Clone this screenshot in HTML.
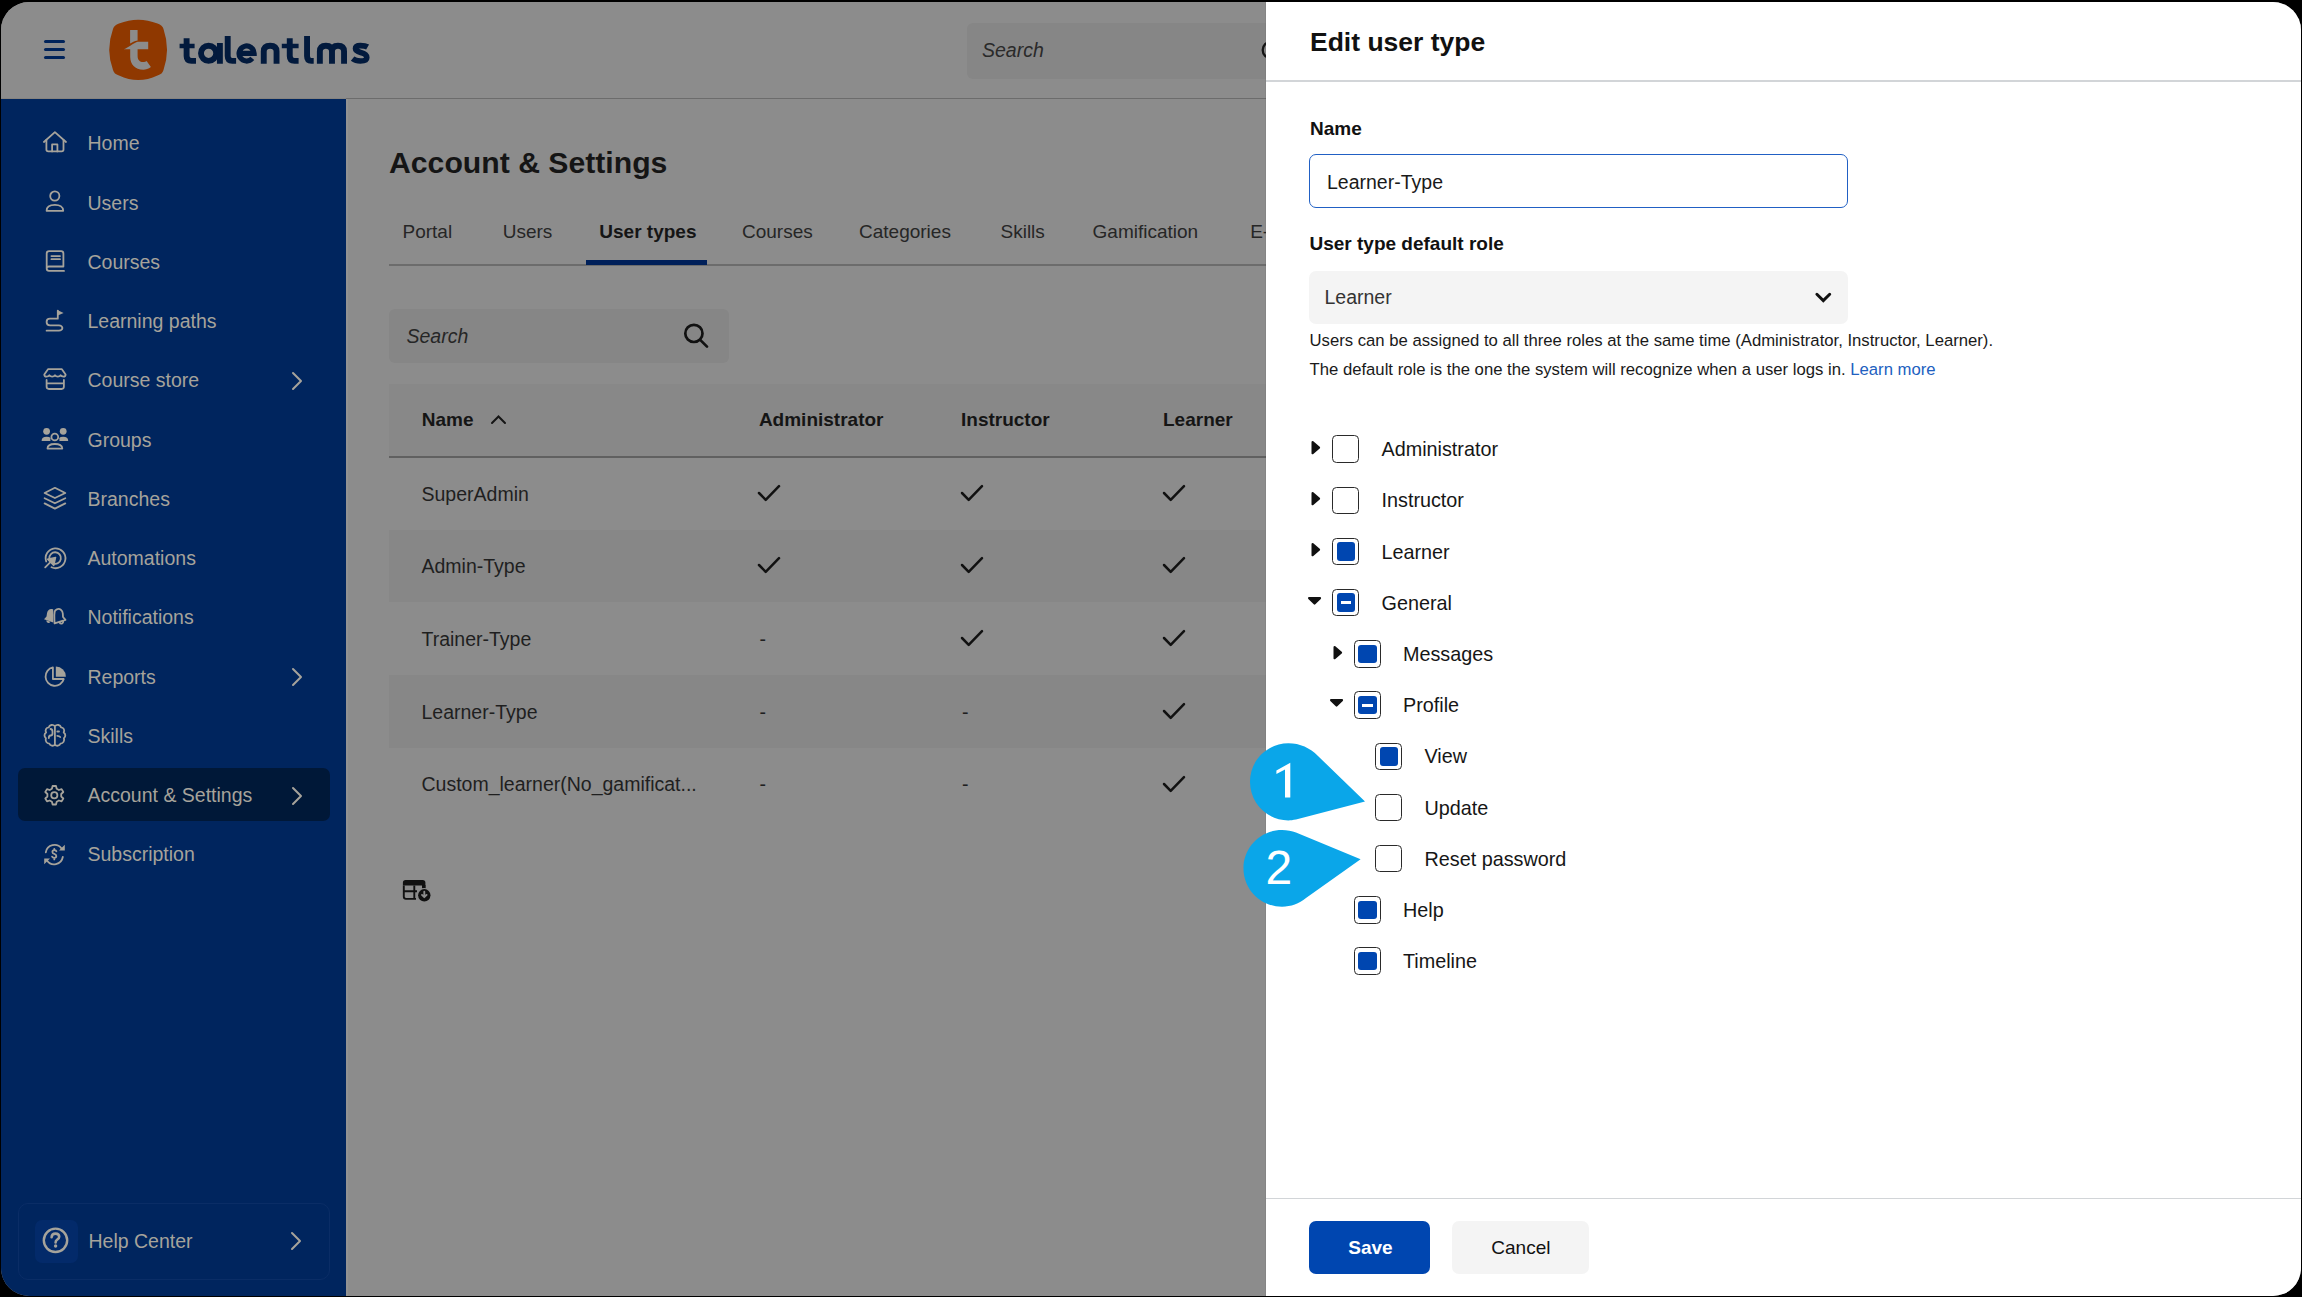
<!DOCTYPE html>
<html><head><meta charset="utf-8"><style>
html,body{margin:0;padding:0;background:#000;}
body{width:2302px;height:1297px;overflow:hidden;position:relative;font-family:"Liberation Sans", sans-serif;}
#f{position:absolute;left:0;top:0;width:2302px;height:1297px;overflow:hidden;clip-path:inset(2px 1px 1px 1px round 28px);background:#8c8c8c;}
.t{position:absolute;line-height:0;white-space:nowrap;}
.r{position:absolute;}
</style></head><body><div id="f">
<div class="r" style="left:0px;top:0px;width:1266px;height:98px;background:#8c8c8c;"></div>
<div class="r" style="left:0px;top:98px;width:346px;height:1px;background:#858380;"></div>
<div class="r" style="left:346px;top:98px;width:920px;height:1.2px;background:#6c6c6c;"></div>
<div class="r" style="left:0px;top:99px;width:346px;height:1200px;background:#00255e;"></div>
<div class="r" style="left:346px;top:99px;width:920px;height:1200px;background:#8c8c8c;"></div>
<div class="r" style="left:346px;top:99px;width:2.2px;height:1200px;background:#929292;"></div>
<div class="r" style="left:44.2px;top:40.25px;width:21.2px;height:2.9px;background:#00235a;border-radius:1.5px;"></div>
<div class="r" style="left:44.2px;top:48.449999999999996px;width:21.2px;height:2.9px;background:#00235a;border-radius:1.5px;"></div>
<div class="r" style="left:44.2px;top:56.449999999999996px;width:21.2px;height:2.9px;background:#00235a;border-radius:1.5px;"></div>
<svg class="r" style="left:105px;top:15px;" width="70" height="70" viewBox="0 0 70 70"><path d="M14 8.5 Q33.2 0.8 52.5 8.5 Q57.5 10 58.5 14 Q65.5 34.5 58.5 55 Q57.5 59 52.5 60.5 Q33.2 69.5 14 60.5 Q9 59 8 55 Q0.5 34.5 8 14 Q9 10 14 8.5 Z" fill="#8f3800"/><path d="M18.6 34.3 C23 33 27.5 28.5 32.6 26.7 L43.2 26.7 L43.2 34.3 L32.6 34.3 L32.6 41 C32.6 45 35 47 38 47 C39.5 47 40.8 46.6 41.6 45.9 L45.9 52.1 C43.5 54 40.8 54.8 38.3 54.8 C30 54.8 25.2 49 25.2 42 L25.2 34.3 Z M25.1 15.1 L32.6 15.1 L32.6 25.4 C29.5 25.9 27 27.2 25.1 28.5 Z" fill="#8c8c8c"/></svg>
<svg class="r" style="left:170px;top:25px;" width="210" height="50" viewBox="0 0 210 50"><g fill="none" stroke="#021a3d" stroke-width="5.9"><path d="M16.6 13.2 V31 Q16.6 35.85 21.5 35.85 H26"/><path d="M9.6 21 H24.6" stroke-width="4.6"/><circle cx="38.6" cy="28.3" r="7.6"/><path d="M49.9 18 V38.8"/><path d="M57.7 11 V31 Q57.7 35.85 62.3 35.85 H66.1"/><path d="M70.5 28.3 H84.1 A7.5 7.5 0 1 0 82.3 33.4" stroke-width="5.2"/><path d="M93.75 38.8 V26.5 Q93.75 20.75 100.15 20.75 Q106.55 20.75 106.55 26.5 V38.8"/><path d="M119.75 13.2 V31 Q119.75 35.85 124.5 35.85 H128.6"/><path d="M111.8 21 H128.6" stroke-width="4.6"/><path d="M137.05 11 V31 Q137.05 35.85 141.3 35.85 H143.7"/><path d="M149.85 38.8 V26.5 Q149.85 20.75 155.9 20.75 Q162 20.75 162 26.5 V38.8 M162 26.5 Q162 20.75 168 20.75 Q174.05 20.75 174.05 26.5 V38.8"/><path d="M197.6 22 Q195.3 20.6 190.4 20.6 Q185.5 20.6 185.5 23.6 Q185.5 26.2 190.6 27.4 Q196.8 28.8 196.8 32.6 Q196.8 36 190.4 36 Q185.6 36 182.6 33.6" stroke-width="5.6"/></g></svg>
<div class="r" style="left:967px;top:22.5px;width:320px;height:56px;background:#868686;border-radius:6px;"></div>
<div class="t" style="left:982px;top:50.24px;font-size:19.5px;color:#2a2a2a;font-style:italic;">Search</div>
<svg class="r" style="left:1258px;top:38px;" width="30" height="30" viewBox="0 0 30 30"><circle cx="13" cy="12" r="8.3" fill="none" stroke="#151515" stroke-width="2.3"/></svg>
<div class="r" style="left:18px;top:767.5px;width:312px;height:53.5px;background:#001838;border-radius:7px;"></div>
<div class="t" style="left:87.5px;top:143.44px;font-size:19.5px;color:#a6a39b;">Home</div>
<svg class="r" style="left:43px;top:130.2px;overflow:visible;" width="24" height="24" viewBox="0 0 24 24"><path d="M0.9 12 L11.9 2.2 L23 12" fill="none" stroke="#a6a39b" stroke-width="1.8" stroke-linecap="round" stroke-linejoin="round"/><path d="M3.4 9.8 V19.6 Q3.4 21.4 5.2 21.4 H18.6 Q20.5 21.4 20.5 19.6 V9.8" fill="none" stroke="#a6a39b" stroke-width="1.8" stroke-linecap="round" stroke-linejoin="round"/><path d="M9.1 21.4 V14.4 H14.4 V21.4" fill="none" stroke="#a6a39b" stroke-width="1.8" stroke-linecap="round" stroke-linejoin="round"/></svg>
<div class="t" style="left:87.5px;top:202.67px;font-size:19.5px;color:#a6a39b;">Users</div>
<svg class="r" style="left:43px;top:189.42999999999998px;overflow:visible;" width="24" height="24" viewBox="0 0 24 24"><circle cx="11.8" cy="7" r="4.6" fill="none" stroke="#a6a39b" stroke-width="1.8" stroke-linecap="round" stroke-linejoin="round"/><path d="M3.6 21.8 C3.6 17.6 7.4 15.9 11.9 15.9 C16.4 15.9 20.2 17.6 20.2 21.8 Z" fill="none" stroke="#a6a39b" stroke-width="1.8" stroke-linecap="round" stroke-linejoin="round"/></svg>
<div class="t" style="left:87.5px;top:261.90px;font-size:19.5px;color:#a6a39b;">Courses</div>
<svg class="r" style="left:43px;top:248.65999999999997px;overflow:visible;" width="24" height="24" viewBox="0 0 24 24"><path d="M3.7 19.6 V4.6 Q3.7 2.2 6.1 2.2 H18.1 Q20.4 2.2 20.4 4.6 V17.5 H6 Q3.7 17.5 3.7 19.6 Q3.7 21.9 6 21.9 H21" fill="none" stroke="#a6a39b" stroke-width="1.8" stroke-linecap="round" stroke-linejoin="round"/><path d="M8.4 7.1 H17 M8.4 10.2 H17" fill="none" stroke="#a6a39b" stroke-width="1.8" stroke-linecap="round" stroke-linejoin="round"/></svg>
<div class="t" style="left:87.5px;top:321.13px;font-size:19.5px;color:#a6a39b;">Learning paths</div>
<svg class="r" style="left:43px;top:307.89px;overflow:visible;" width="24" height="24" viewBox="0 0 24 24"><path d="M14.8 10.7 H7 C5 10.7 3.6 12.2 3.6 14 C3.6 15.8 5 17.3 7 17.3 H16 C17.9 17.3 19.4 18.6 19.4 20 C19.4 21.4 17.9 22.7 16 22.7 H3.6 M14.8 10.7 V2.6" fill="none" stroke="#a6a39b" stroke-width="1.8" stroke-linecap="round" stroke-linejoin="round"/><path d="M14.8 2.3 L20.6 5 L14.8 7.4 Z" fill="#a6a39b"/></svg>
<div class="t" style="left:87.5px;top:380.36px;font-size:19.5px;color:#a6a39b;">Course store</div>
<svg class="r" style="left:43px;top:367.12px;overflow:visible;" width="24" height="24" viewBox="0 0 24 24"><path d="M5 2.2 H18.9 L22.6 7.4 Q22.6 9.6 20.5 9.6 Q18.3 9.6 17.6 8.3 Q16.6 9.6 14.8 9.6 Q13 9.6 12 8.3 Q11 9.6 9.2 9.6 Q7.4 9.6 6.4 8.3 Q5.6 9.6 3.4 9.6 Q1.3 9.6 1.3 7.4 Z" fill="none" stroke="#a6a39b" stroke-width="1.8" stroke-linecap="round" stroke-linejoin="round"/><path d="M3.6 12.9 V19.6 Q3.6 22 6 22 H18.6 Q20.9 22 20.9 19.6 V12.9 M3.6 16.4 H20.9" fill="none" stroke="#a6a39b" stroke-width="1.8" stroke-linecap="round" stroke-linejoin="round"/></svg>
<svg class="r" style="left:290px;top:371.12px;" width="14" height="20" viewBox="0 0 14 20"><path d="M3 2 L11 10 L3 18" fill="none" stroke="#a6a39b" stroke-width="2" stroke-linecap="round" stroke-linejoin="round"/></svg>
<div class="t" style="left:87.5px;top:439.59px;font-size:19.5px;color:#a6a39b;">Groups</div>
<svg class="r" style="left:43px;top:426.34999999999997px;overflow:visible;" width="24" height="24" viewBox="0 0 24 24"><circle cx="3.6" cy="5.3" r="3.4" fill="#a6a39b"/><circle cx="20.2" cy="5.3" r="3.4" fill="#a6a39b"/><path d="M-1.4 14.9 Q-1.4 10.7 3.6 10.7 Q6.5 10.7 7.6 12 Q7.2 13.3 7.4 14.9 Z M25.2 14.9 Q25.2 10.7 20.2 10.7 Q17.3 10.7 16.2 12 Q16.6 13.3 16.4 14.9 Z" fill="#a6a39b"/><circle cx="11.8" cy="11" r="3.4" fill="none" stroke="#a6a39b" stroke-width="1.8" stroke-linecap="round" stroke-linejoin="round"/><path d="M4.5 22.6 C4.5 19.5 7.5 18 11.9 18 C16.3 18 19.3 19.5 19.3 22.6 Z" fill="none" stroke="#a6a39b" stroke-width="1.8" stroke-linecap="round" stroke-linejoin="round"/></svg>
<div class="t" style="left:87.5px;top:498.82px;font-size:19.5px;color:#a6a39b;">Branches</div>
<svg class="r" style="left:43px;top:485.58px;overflow:visible;" width="24" height="24" viewBox="0 0 24 24"><path d="M11.9 1.8 L22.3 7 L11.9 12 L1.6 7 Z" fill="none" stroke="#a6a39b" stroke-width="1.8" stroke-linecap="round" stroke-linejoin="round"/><path d="M1.6 12.2 L11.9 17.3 L22.3 12.2 M1.6 17.4 L11.9 22.6 L22.3 17.4" fill="none" stroke="#a6a39b" stroke-width="1.8" stroke-linecap="round" stroke-linejoin="round"/></svg>
<div class="t" style="left:87.5px;top:558.05px;font-size:19.5px;color:#a6a39b;">Automations</div>
<svg class="r" style="left:43px;top:544.81px;overflow:visible;" width="24" height="24" viewBox="0 0 24 24"><path d="M3.2 16.5 A9.9 9.9 0 1 1 8.5 22.3" fill="none" stroke="#a6a39b" stroke-width="1.8" stroke-linecap="round" stroke-linejoin="round"/><path d="M6.3 13.5 A5.8 5.8 0 1 1 10.4 18.6" fill="none" stroke="#a6a39b" stroke-width="1.8" stroke-linecap="round" stroke-linejoin="round"/><path d="M2.2 22.4 L8.4 16.2" fill="none" stroke="#a6a39b" stroke-width="1.8" stroke-linecap="round" stroke-linejoin="round" stroke-width="2.8"/><path d="M12.6 12.4 L4.6 14.2 L10.8 20.4 Z" fill="#a6a39b" stroke="#a6a39b" stroke-width="1.4" stroke-linejoin="round"/></svg>
<div class="t" style="left:87.5px;top:617.28px;font-size:19.5px;color:#a6a39b;">Notifications</div>
<svg class="r" style="left:43px;top:604.04px;overflow:visible;" width="24" height="24" viewBox="0 0 24 24"><path d="M10.2 5.5 C7.2 4 4.5 6 4 9.3 L3.5 12.6 L1 15.3 L10.2 18.6 Z" fill="#a6a39b"/><path d="M3.4 16.3 Q3.2 18.4 5 19 Q6.6 19.4 7.3 17.8" fill="#a6a39b"/><path d="M13.8 5.3 C16.8 4 19.6 6.2 19.8 9.5 L20 13 L22.5 15.8 L11.6 19.4 L11.4 15.8 C11.2 12.4 11.4 9 11.7 7.5 C11.9 6.4 12.6 5.8 13.8 5.3 Z" fill="none" stroke="#a6a39b" stroke-width="1.8" stroke-linecap="round" stroke-linejoin="round"/><path d="M16.5 18.5 Q17.4 20 19 19.6 Q20.4 19.2 20.2 17.4" fill="none" stroke="#a6a39b" stroke-width="1.8" stroke-linecap="round" stroke-linejoin="round"/></svg>
<div class="t" style="left:87.5px;top:676.51px;font-size:19.5px;color:#a6a39b;">Reports</div>
<svg class="r" style="left:43px;top:663.27px;overflow:visible;" width="24" height="24" viewBox="0 0 24 24"><g transform="translate(0 1.1)"><path d="M9.9 3.3 A9.3 9.3 0 1 0 20.8 14.9 H9.9 Z" fill="none" stroke="#a6a39b" stroke-width="1.8" stroke-linecap="round" stroke-linejoin="round"/><path d="M12.8 2.5 A10 10 0 0 1 22.9 12.6 H12.8 Z" fill="#a6a39b"/></g></svg>
<svg class="r" style="left:290px;top:667.27px;" width="14" height="20" viewBox="0 0 14 20"><path d="M3 2 L11 10 L3 18" fill="none" stroke="#a6a39b" stroke-width="2" stroke-linecap="round" stroke-linejoin="round"/></svg>
<div class="t" style="left:87.5px;top:735.74px;font-size:19.5px;color:#a6a39b;">Skills</div>
<svg class="r" style="left:43px;top:722.5px;overflow:visible;" width="24" height="24" viewBox="0 0 24 24"><path d="M11.9 3.2 C10 1.2 6.5 1.6 5.8 4.3 C3 4.4 1.9 7.3 3.1 9.4 C1 10.8 1 13.8 2.9 15.2 C2 17.8 3.6 20.6 6.3 20.6 C7 22.9 10.4 23.5 11.9 21.5 C13.4 23.5 16.8 22.9 17.5 20.6 C20.2 20.6 21.8 17.8 20.9 15.2 C22.8 13.8 22.8 10.8 20.7 9.4 C21.9 7.3 20.8 4.4 18 4.3 C17.3 1.6 13.8 1.2 11.9 3.2 Z M11.9 3.2 V21.5" fill="none" stroke="#a6a39b" stroke-width="1.8" stroke-linecap="round" stroke-linejoin="round" stroke-width="1.6"/><path d="M7.5 6 Q9.5 6.3 9.5 8.5 V10.5 Q9.5 12.5 7.5 12.5 Q5.8 12.8 5.8 15 M14.3 8.5 H16 M14.3 12.8 Q16.3 12.8 17.2 14" fill="none" stroke="#a6a39b" stroke-width="1.8" stroke-linecap="round" stroke-linejoin="round" stroke-width="1.4"/></svg>
<div class="t" style="left:87.5px;top:794.97px;font-size:19.5px;color:#a6a39b;">Account &amp; Settings</div>
<svg class="r" style="left:43px;top:781.73px;overflow:visible;" width="24" height="24" viewBox="0 0 24 24"><path d="M9.6 2.2 H13 L13.7 5 L15.9 6.2 L18.6 5.3 L20.3 8.2 L18.2 10.2 V12.7 L20.3 14.7 L18.6 17.6 L15.9 16.7 L13.7 17.9 L13 20.7 H9.6 L8.9 17.9 L6.7 16.7 L4 17.6 L2.3 14.7 L4.4 12.7 V10.2 L2.3 8.2 L4 5.3 L6.7 6.2 L8.9 5 Z" fill="none" stroke="#a6a39b" stroke-width="1.8" stroke-linecap="round" stroke-linejoin="round" stroke-width="1.7" transform="translate(0 1.8)"/><circle cx="11.3" cy="13.2" r="3.1" fill="none" stroke="#a6a39b" stroke-width="1.8" stroke-linecap="round" stroke-linejoin="round"/></svg>
<svg class="r" style="left:290px;top:785.73px;" width="14" height="20" viewBox="0 0 14 20"><path d="M3 2 L11 10 L3 18" fill="none" stroke="#a6a39b" stroke-width="2" stroke-linecap="round" stroke-linejoin="round"/></svg>
<div class="t" style="left:87.5px;top:854.20px;font-size:19.5px;color:#a6a39b;">Subscription</div>
<svg class="r" style="left:43px;top:840.96px;overflow:visible;" width="24" height="24" viewBox="0 0 24 24"><path d="M2.8 11.3 A8.8 8.8 0 0 1 18.6 7.6 M19.8 16 A8.8 8.8 0 0 1 3.9 19.5" fill="none" stroke="#a6a39b" stroke-width="1.8" stroke-linecap="round" stroke-linejoin="round" stroke-width="1.9"/><path d="M21.8 3.8 V9.6 H16 Z M1.2 23.2 V17.4 H7 Z" fill="#a6a39b"/><path d="M13.4 10.2 Q12.8 9.2 11.3 9.2 Q9.4 9.2 9.4 10.9 Q9.4 12.4 11.3 12.9 Q13.3 13.5 13.3 15 Q13.3 16.8 11.3 16.8 Q9.7 16.8 9.1 15.6 M11.3 7.8 V9.2 M11.3 16.8 V18.4" fill="none" stroke="#a6a39b" stroke-width="1.8" stroke-linecap="round" stroke-linejoin="round" stroke-width="1.6"/></svg>
<div class="r" style="left:18px;top:1202.5px;width:312px;height:77px;border:1.5px solid #0a2d66;border-radius:10px;box-sizing:border-box;"></div>
<div class="r" style="left:34.5px;top:1219.5px;width:43px;height:43px;background:#032a6a;border-radius:7px;"></div>
<svg class="r" style="left:41px;top:1226px;" width="29" height="29" viewBox="0 0 29 29"><circle cx="14.5" cy="14.3" r="11.7" fill="none" stroke="#a6a39b" stroke-width="2.4"/><path d="M10.6 11.2 Q10.8 7.6 14.5 7.6 Q18.2 7.6 18.2 10.8 Q18.2 12.8 16 13.8 Q14.6 14.5 14.6 16.4" fill="none" stroke="#a6a39b" stroke-width="2.6" stroke-linecap="round"/><circle cx="14.6" cy="20" r="1.7" fill="#a6a39b"/></svg>
<div class="t" style="left:88.5px;top:1241.24px;font-size:19.5px;color:#a6a39b;">Help Center</div>
<svg class="r" style="left:289px;top:1231px;" width="14" height="20" viewBox="0 0 14 20"><path d="M3 2 L11 10 L3 18" fill="none" stroke="#a6a39b" stroke-width="2" stroke-linecap="round" stroke-linejoin="round"/></svg>
<div class="t" style="left:389px;top:162.54px;font-size:30.2px;color:#151515;font-weight:bold;">Account &amp; Settings</div>
<div class="t" style="left:402.5px;top:231.92px;font-size:19px;color:#262626;">Portal</div>
<div class="t" style="left:502.7px;top:231.92px;font-size:19px;color:#262626;">Users</div>
<div class="t" style="left:599.3px;top:231.92px;font-size:19px;color:#151515;font-weight:bold;">User types</div>
<div class="t" style="left:742px;top:231.92px;font-size:19px;color:#262626;">Courses</div>
<div class="t" style="left:859px;top:231.92px;font-size:19px;color:#262626;">Categories</div>
<div class="t" style="left:1000.5px;top:231.92px;font-size:19px;color:#262626;">Skills</div>
<div class="t" style="left:1092.6px;top:231.92px;font-size:19px;color:#262626;">Gamification</div>
<div class="t" style="left:1250.2px;top:231.92px;font-size:19px;color:#262626;">E-learning</div>
<div class="r" style="left:389px;top:264px;width:877px;height:1.5px;background:#6c6c6c;"></div>
<div class="r" style="left:585.7px;top:259.7px;width:121px;height:5px;background:#00205a;"></div>
<div class="r" style="left:389px;top:309px;width:340px;height:53.5px;background:#868686;border-radius:6px;"></div>
<div class="t" style="left:406.5px;top:335.74px;font-size:19.5px;color:#262626;font-style:italic;">Search</div>
<svg class="r" style="left:680px;top:320px;" width="32" height="32" viewBox="0 0 32 32"><circle cx="13.9" cy="13.4" r="8.6" fill="none" stroke="#111" stroke-width="2.7"/><path d="M20.2 19.9 L27 26.6" stroke="#111" stroke-width="2.7" stroke-linecap="round"/></svg>
<div class="r" style="left:389px;top:384px;width:877px;height:72.5px;background:#888888;"></div>
<div class="r" style="left:389px;top:456px;width:877px;height:1.5px;background:#606060;"></div>
<div class="t" style="left:421.8px;top:420.22px;font-size:19px;color:#151515;font-weight:bold;">Name</div>
<div class="t" style="left:758.9px;top:420.22px;font-size:19px;color:#151515;font-weight:bold;">Administrator</div>
<div class="t" style="left:961px;top:420.22px;font-size:19px;color:#151515;font-weight:bold;">Instructor</div>
<div class="t" style="left:1163px;top:420.22px;font-size:19px;color:#151515;font-weight:bold;">Learner</div>
<div class="t" style="left:421.5px;top:493.54px;font-size:19.5px;color:#1f1f1f;">SuperAdmin</div>
<svg class="r" style="left:757.4px;top:482.7px;" width="24" height="20" viewBox="0 0 24 20"><path d="M2 10 L8.7 16.8 L22 3.2" fill="none" stroke="#111" stroke-width="2.5" stroke-linecap="round" stroke-linejoin="round"/></svg>
<svg class="r" style="left:960px;top:482.7px;" width="24" height="20" viewBox="0 0 24 20"><path d="M2 10 L8.7 16.8 L22 3.2" fill="none" stroke="#111" stroke-width="2.5" stroke-linecap="round" stroke-linejoin="round"/></svg>
<svg class="r" style="left:1162.2px;top:482.7px;" width="24" height="20" viewBox="0 0 24 20"><path d="M2 10 L8.7 16.8 L22 3.2" fill="none" stroke="#111" stroke-width="2.5" stroke-linecap="round" stroke-linejoin="round"/></svg>
<div class="r" style="left:389px;top:529.5px;width:877px;height:72.7px;background:#878787;"></div>
<div class="t" style="left:421.5px;top:566.24px;font-size:19.5px;color:#1f1f1f;">Admin-Type</div>
<svg class="r" style="left:757.4px;top:555.4px;" width="24" height="20" viewBox="0 0 24 20"><path d="M2 10 L8.7 16.8 L22 3.2" fill="none" stroke="#111" stroke-width="2.5" stroke-linecap="round" stroke-linejoin="round"/></svg>
<svg class="r" style="left:960px;top:555.4px;" width="24" height="20" viewBox="0 0 24 20"><path d="M2 10 L8.7 16.8 L22 3.2" fill="none" stroke="#111" stroke-width="2.5" stroke-linecap="round" stroke-linejoin="round"/></svg>
<svg class="r" style="left:1162.2px;top:555.4px;" width="24" height="20" viewBox="0 0 24 20"><path d="M2 10 L8.7 16.8 L22 3.2" fill="none" stroke="#111" stroke-width="2.5" stroke-linecap="round" stroke-linejoin="round"/></svg>
<div class="t" style="left:421.5px;top:638.94px;font-size:19.5px;color:#1f1f1f;">Trainer-Type</div>
<div class="t" style="left:759.4px;top:638.94px;font-size:19.5px;color:#1f1f1f;">-</div>
<svg class="r" style="left:960px;top:628.1px;" width="24" height="20" viewBox="0 0 24 20"><path d="M2 10 L8.7 16.8 L22 3.2" fill="none" stroke="#111" stroke-width="2.5" stroke-linecap="round" stroke-linejoin="round"/></svg>
<svg class="r" style="left:1162.2px;top:628.1px;" width="24" height="20" viewBox="0 0 24 20"><path d="M2 10 L8.7 16.8 L22 3.2" fill="none" stroke="#111" stroke-width="2.5" stroke-linecap="round" stroke-linejoin="round"/></svg>
<div class="r" style="left:389px;top:674.9000000000001px;width:877px;height:72.7px;background:#878787;"></div>
<div class="t" style="left:421.5px;top:711.64px;font-size:19.5px;color:#1f1f1f;">Learner-Type</div>
<div class="t" style="left:759.4px;top:711.64px;font-size:19.5px;color:#1f1f1f;">-</div>
<div class="t" style="left:962px;top:711.64px;font-size:19.5px;color:#1f1f1f;">-</div>
<svg class="r" style="left:1162.2px;top:700.8000000000001px;" width="24" height="20" viewBox="0 0 24 20"><path d="M2 10 L8.7 16.8 L22 3.2" fill="none" stroke="#111" stroke-width="2.5" stroke-linecap="round" stroke-linejoin="round"/></svg>
<div class="t" style="left:421.5px;top:784.34px;font-size:19.5px;color:#1f1f1f;">Custom_learner(No_gamificat...</div>
<div class="t" style="left:759.4px;top:784.34px;font-size:19.5px;color:#1f1f1f;">-</div>
<div class="t" style="left:962px;top:784.34px;font-size:19.5px;color:#1f1f1f;">-</div>
<svg class="r" style="left:1162.2px;top:773.5px;" width="24" height="20" viewBox="0 0 24 20"><path d="M2 10 L8.7 16.8 L22 3.2" fill="none" stroke="#111" stroke-width="2.5" stroke-linecap="round" stroke-linejoin="round"/></svg>
<svg class="r" style="left:400px;top:877px;" width="34" height="28" viewBox="0 0 34 28"><path d="M3.8 8.4 V19.8 Q3.8 21.9 6 21.9 H16 M14.3 8.4 V21.9 M3.8 14.3 H17" fill="none" stroke="#111" stroke-width="1.9"/><path d="M2.9 8.8 V5.6 Q2.9 2.9 5.6 2.9 H22.7 Q25.4 2.9 25.4 5.6 V11.6 L22 11.6 L22 8.4 L2.9 8.4 Z" fill="#111"/><path d="M24.5 8 V12" stroke="#111" stroke-width="1.9"/><circle cx="24.3" cy="18.3" r="7.4" fill="#8c8c8c"/><circle cx="24.3" cy="18.3" r="6.2" fill="#111"/><path d="M24.3 14.8 V19.8 M22 17.9 L24.3 20.2 L26.6 17.9" stroke="#8c8c8c" stroke-width="1.9" fill="none" stroke-linecap="round" stroke-linejoin="round"/></svg>
<svg class="r" style="left:490px;top:414px;" width="17" height="11" viewBox="0 0 17 11"><path d="M2 9 L8.5 2.5 L15 9" fill="none" stroke="#151515" stroke-width="2" stroke-linecap="round"/></svg>
<div class="r" style="left:1264.8px;top:0px;width:1.2px;height:1300px;background:rgba(0,0,0,0.045);"></div>
<div class="r" style="left:1266px;top:0px;width:1040px;height:1300px;background:#fff;"></div>
<div class="t" style="left:1310px;top:42.32px;font-size:26.5px;color:#111;font-weight:bold;">Edit user type</div>
<div class="r" style="left:1266px;top:80px;width:1040px;height:1.5px;background:#d2d5d8;"></div>
<div class="t" style="left:1310px;top:128.62px;font-size:19px;color:#111;font-weight:bold;">Name</div>
<div class="r" style="left:1309px;top:154px;width:539px;height:54px;border:1.8px solid #2160c4;border-radius:7px;box-sizing:border-box;"></div>
<div class="t" style="left:1327px;top:182.04px;font-size:19.5px;color:#1a1a1a;">Learner-Type</div>
<div class="t" style="left:1309.5px;top:244.42px;font-size:19px;color:#111;font-weight:bold;">User type default role</div>
<div class="r" style="left:1309px;top:271px;width:539px;height:52.5px;background:#f4f4f4;border-radius:7px;"></div>
<div class="t" style="left:1324.5px;top:297.44px;font-size:19.5px;color:#333;">Learner</div>
<svg class="r" style="left:1812px;top:289px;" width="22" height="16" viewBox="0 0 22 16"><path d="M4.9 5.3 L11.3 11.6 L17.7 5.3" fill="none" stroke="#111" stroke-width="3" stroke-linecap="round" stroke-linejoin="miter"/></svg>
<div class="t" style="left:1309.5px;top:340.71px;font-size:16.7px;color:#1a1a1a;">Users can be assigned to all three roles at the same time (Administrator, Instructor, Learner).</div>
<div class="t" style="left:1309.5px;top:369.51px;font-size:16.7px;color:#1a1a1a;">The default role is the one the system will recognize when a user logs in. <span style="color:#2160c0">Learn more</span></div>
<svg class="r" style="left:1310.0px;top:441.0px;" width="12" height="16" viewBox="0 0 12 16"><path d="M2.6 1.2 L9 6.7 L2.6 12.2 Z" fill="#111" stroke="#111" stroke-width="2.2" stroke-linejoin="round"/></svg>
<div class="r" style="left:1332.0px;top:435.4px;width:27.4px;height:27.4px;border:1.7px solid #2a2a2a;border-radius:4.5px;box-sizing:border-box;background:#fff;"></div>
<div class="t" style="left:1381.5px;top:449.14px;font-size:19.8px;color:#161616;">Administrator</div>
<svg class="r" style="left:1310.0px;top:492.2px;" width="12" height="16" viewBox="0 0 12 16"><path d="M2.6 1.2 L9 6.7 L2.6 12.2 Z" fill="#111" stroke="#111" stroke-width="2.2" stroke-linejoin="round"/></svg>
<div class="r" style="left:1332.0px;top:486.59999999999997px;width:27.4px;height:27.4px;border:1.7px solid #2a2a2a;border-radius:4.5px;box-sizing:border-box;background:#fff;"></div>
<div class="t" style="left:1381.5px;top:500.34px;font-size:19.8px;color:#161616;">Instructor</div>
<svg class="r" style="left:1310.0px;top:543.4px;" width="12" height="16" viewBox="0 0 12 16"><path d="M2.6 1.2 L9 6.7 L2.6 12.2 Z" fill="#111" stroke="#111" stroke-width="2.2" stroke-linejoin="round"/></svg>
<div class="r" style="left:1332.0px;top:537.8px;width:27.4px;height:27.4px;border:1.7px solid #2a2a2a;border-radius:4.5px;box-sizing:border-box;background:#fff;"></div>
<div class="r" style="left:1336.5px;top:542.1999999999999px;width:18.5px;height:18.5px;background:#0046b0;border-radius:3px;"></div>
<div class="t" style="left:1381.5px;top:551.54px;font-size:19.8px;color:#161616;">Learner</div>
<svg class="r" style="left:1307.0px;top:594.6px;" width="16" height="12" viewBox="0 0 16 12"><path d="M2.1 3.1 L13 3.1 L7.55 8.5 Z" fill="#111" stroke="#111" stroke-width="2.2" stroke-linejoin="round"/></svg>
<div class="r" style="left:1332.0px;top:589.0px;width:27.4px;height:27.4px;border:1.7px solid #2a2a2a;border-radius:4.5px;box-sizing:border-box;background:#fff;"></div>
<div class="r" style="left:1336.5px;top:593.4px;width:18.5px;height:18.5px;background:#0046b0;border-radius:3px;"></div>
<div class="r" style="left:1340.5px;top:601.4px;width:10.5px;height:2.8px;background:#fff;"></div>
<div class="t" style="left:1381.5px;top:602.74px;font-size:19.8px;color:#161616;">General</div>
<svg class="r" style="left:1331.5px;top:645.8px;" width="12" height="16" viewBox="0 0 12 16"><path d="M2.6 1.2 L9 6.7 L2.6 12.2 Z" fill="#111" stroke="#111" stroke-width="2.2" stroke-linejoin="round"/></svg>
<div class="r" style="left:1353.5px;top:640.1999999999999px;width:27.4px;height:27.4px;border:1.7px solid #2a2a2a;border-radius:4.5px;box-sizing:border-box;background:#fff;"></div>
<div class="r" style="left:1358.0px;top:644.5999999999999px;width:18.5px;height:18.5px;background:#0046b0;border-radius:3px;"></div>
<div class="t" style="left:1403.0px;top:653.94px;font-size:19.8px;color:#161616;">Messages</div>
<svg class="r" style="left:1328.5px;top:697.0px;" width="16" height="12" viewBox="0 0 16 12"><path d="M2.1 3.1 L13 3.1 L7.55 8.5 Z" fill="#111" stroke="#111" stroke-width="2.2" stroke-linejoin="round"/></svg>
<div class="r" style="left:1353.5px;top:691.4px;width:27.4px;height:27.4px;border:1.7px solid #2a2a2a;border-radius:4.5px;box-sizing:border-box;background:#fff;"></div>
<div class="r" style="left:1358.0px;top:695.8px;width:18.5px;height:18.5px;background:#0046b0;border-radius:3px;"></div>
<div class="r" style="left:1362.0px;top:703.8px;width:10.5px;height:2.8px;background:#fff;"></div>
<div class="t" style="left:1403.0px;top:705.14px;font-size:19.8px;color:#161616;">Profile</div>
<div class="r" style="left:1375.0px;top:742.6px;width:27.4px;height:27.4px;border:1.7px solid #2a2a2a;border-radius:4.5px;box-sizing:border-box;background:#fff;"></div>
<div class="r" style="left:1379.5px;top:747.0px;width:18.5px;height:18.5px;background:#0046b0;border-radius:3px;"></div>
<div class="t" style="left:1424.5px;top:756.34px;font-size:19.8px;color:#161616;">View</div>
<div class="r" style="left:1375.0px;top:793.8000000000001px;width:27.4px;height:27.4px;border:1.7px solid #2a2a2a;border-radius:4.5px;box-sizing:border-box;background:#fff;"></div>
<div class="t" style="left:1424.5px;top:807.54px;font-size:19.8px;color:#161616;">Update</div>
<div class="r" style="left:1375.0px;top:845.0px;width:27.4px;height:27.4px;border:1.7px solid #2a2a2a;border-radius:4.5px;box-sizing:border-box;background:#fff;"></div>
<div class="t" style="left:1424.5px;top:858.74px;font-size:19.8px;color:#161616;">Reset password</div>
<div class="r" style="left:1353.5px;top:896.1999999999999px;width:27.4px;height:27.4px;border:1.7px solid #2a2a2a;border-radius:4.5px;box-sizing:border-box;background:#fff;"></div>
<div class="r" style="left:1358.0px;top:900.5999999999999px;width:18.5px;height:18.5px;background:#0046b0;border-radius:3px;"></div>
<div class="t" style="left:1403.0px;top:909.94px;font-size:19.8px;color:#161616;">Help</div>
<div class="r" style="left:1353.5px;top:947.4px;width:27.4px;height:27.4px;border:1.7px solid #2a2a2a;border-radius:4.5px;box-sizing:border-box;background:#fff;"></div>
<div class="r" style="left:1358.0px;top:951.8px;width:18.5px;height:18.5px;background:#0046b0;border-radius:3px;"></div>
<div class="t" style="left:1403.0px;top:961.14px;font-size:19.8px;color:#161616;">Timeline</div>
<svg class="r" style="left:1240px;top:735px;" width="135" height="95" viewBox="1240 735 135 95"><path d="M1288.4 743.3 C1300 743.3 1310 748 1318 756 L1365 801.6 L1296 819.5 C1293 820 1290.5 820.4 1288.4 820.4 C1267 820.4 1250 803 1250 781.8 C1250 760.5 1267 743.3 1288.4 743.3 Z" fill="#0aa6e9"/></svg>
<svg class="r" style="left:1236px;top:824px;" width="130" height="90" viewBox="1236 824 130 90"><path d="M1282 830 C1287 830 1292 831 1296 832.5 L1360.6 859.2 L1306 898 C1299 903.5 1291 906.7 1282 906.7 C1260.8 906.7 1243.5 889.5 1243.5 868.4 C1243.5 847.2 1260.8 830 1282 830 Z" fill="#0aa6e9"/></svg>
<svg class="r" style="left:1270px;top:760px;" width="25" height="40" viewBox="0 0 25 40"><path d="M6.4 10.6 L20.3 2.7 L20.3 37.4 L15 37.4 L15 9.5 L6.4 13.9 Z" fill="#fff"/></svg>
<div class="t" style="left:1265.5px;top:868.47px;font-size:48px;color:#fff;">2</div>
<div class="r" style="left:1266px;top:1197.5px;width:1040px;height:1.5px;background:#d2d5d8;"></div>
<div class="r" style="left:1309.3px;top:1220.5px;width:121px;height:53.5px;background:#0046b0;border-radius:7px;"></div>
<div class="t" style="left:1348.3px;top:1247.62px;font-size:19px;color:#fff;font-weight:bold;">Save</div>
<div class="r" style="left:1452px;top:1220.5px;width:136.5px;height:53.5px;background:#f4f4f4;border-radius:7px;"></div>
<div class="t" style="left:1491.3px;top:1247.62px;font-size:19px;color:#111;">Cancel</div>
</div></body></html>
